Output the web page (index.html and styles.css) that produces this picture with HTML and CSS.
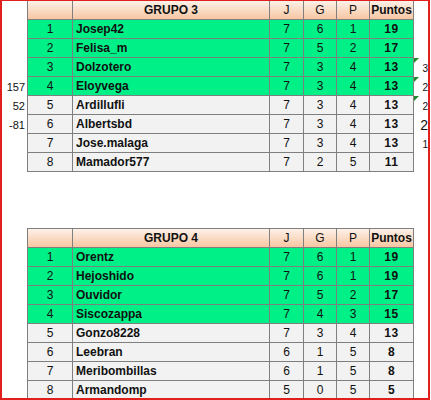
FILE: index.html
```html
<!DOCTYPE html>
<html>
<head>
<meta charset="utf-8">
<link rel="stylesheet" href="styles.css">
</head>
<body>
<div class="frame">
  <div class="table t1">
    <div class="row hdr"><span class="lbl"></span><span class="c first"></span><span class="c name center">GRUPO 3</span><span class="c">J</span><span class="c">G</span><span class="c">P</span><span class="c">Puntos</span><span class="ext"></span></div>
    <div class="row green"><span class="lbl"></span><span class="c first">1</span><span class="c name">Josep42</span><span class="c">7</span><span class="c">6</span><span class="c">1</span><span class="c pts">19</span><span class="ext"></span></div>
    <div class="row green"><span class="lbl"></span><span class="c first">2</span><span class="c name">Felisa_m</span><span class="c">7</span><span class="c">5</span><span class="c">2</span><span class="c pts">17</span><span class="ext"></span></div>
    <div class="row green"><span class="lbl"></span><span class="c first">3</span><span class="c name">Dolzotero</span><span class="c">7</span><span class="c">3</span><span class="c">4</span><span class="c pts">13</span><span class="ext warn">3</span></div>
    <div class="row green"><span class="lbl">157</span><span class="c first">4</span><span class="c name">Eloyvega</span><span class="c">7</span><span class="c">3</span><span class="c">4</span><span class="c pts">13</span><span class="ext warn">2</span></div>
    <div class="row grey"><span class="lbl">52</span><span class="c first">5</span><span class="c name">Ardillufli</span><span class="c">7</span><span class="c">3</span><span class="c">4</span><span class="c pts">13</span><span class="ext warn">2</span></div>
    <div class="row grey"><span class="lbl">-81</span><span class="c first">6</span><span class="c name">Albertsbd</span><span class="c">7</span><span class="c">3</span><span class="c">4</span><span class="c pts">13</span><span class="ext big">2</span></div>
    <div class="row grey"><span class="lbl"></span><span class="c first">7</span><span class="c name">Jose.malaga</span><span class="c">7</span><span class="c">3</span><span class="c">4</span><span class="c pts">13</span><span class="ext">1</span></div>
    <div class="row grey"><span class="lbl"></span><span class="c first">8</span><span class="c name">Mamador577</span><span class="c">7</span><span class="c">2</span><span class="c">5</span><span class="c pts">11</span><span class="ext"></span></div>
  </div>
  <div class="table t2">
    <div class="row hdr"><span class="lbl"></span><span class="c first"></span><span class="c name center">GRUPO 4</span><span class="c">J</span><span class="c">G</span><span class="c">P</span><span class="c">Puntos</span><span class="ext"></span></div>
    <div class="row green"><span class="lbl"></span><span class="c first">1</span><span class="c name">Orentz</span><span class="c">7</span><span class="c">6</span><span class="c">1</span><span class="c pts">19</span><span class="ext"></span></div>
    <div class="row green"><span class="lbl"></span><span class="c first">2</span><span class="c name">Hejoshido</span><span class="c">7</span><span class="c">6</span><span class="c">1</span><span class="c pts">19</span><span class="ext"></span></div>
    <div class="row green"><span class="lbl"></span><span class="c first">3</span><span class="c name">Ouvidor</span><span class="c">7</span><span class="c">5</span><span class="c">2</span><span class="c pts">17</span><span class="ext"></span></div>
    <div class="row green"><span class="lbl"></span><span class="c first">4</span><span class="c name">Siscozappa</span><span class="c">7</span><span class="c">4</span><span class="c">3</span><span class="c pts">15</span><span class="ext"></span></div>
    <div class="row grey"><span class="lbl"></span><span class="c first">5</span><span class="c name">Gonzo8228</span><span class="c">7</span><span class="c">3</span><span class="c">4</span><span class="c pts">13</span><span class="ext"></span></div>
    <div class="row grey"><span class="lbl"></span><span class="c first">6</span><span class="c name">Leebran</span><span class="c">6</span><span class="c">1</span><span class="c">5</span><span class="c pts">8</span><span class="ext"></span></div>
    <div class="row grey"><span class="lbl"></span><span class="c first">7</span><span class="c name">Meribombillas</span><span class="c">6</span><span class="c">1</span><span class="c">5</span><span class="c pts">8</span><span class="ext"></span></div>
    <div class="row grey"><span class="lbl"></span><span class="c first">8</span><span class="c name">Armandomp</span><span class="c">5</span><span class="c">0</span><span class="c">5</span><span class="c pts">5</span><span class="ext"></span></div>
  </div>
</div>
</body>
</html>
```
FILE: styles.css
```css
html, body {
  margin: 0;
  padding: 0;
  background: #ffffff;
}
body {
  font-family: "Liberation Sans", Arial, sans-serif;
  font-size: 12px;
  color: #111;
}
.frame {
  box-sizing: border-box;
  width: 430px;
  height: 400px;
  border-top: 1px solid #e0201c;
  border-left: 2px solid #e0201c;
  border-right: 2px solid #e0201c;
  border-bottom: 2px solid #e0201c;
  overflow: hidden;
}
.row {
  display: grid;
  grid-template-columns: 25px 46px 197px 34px 33px 33px 44px 14px;
  height: 19px;
}
.row > span {
  box-sizing: border-box;
  display: flex;
  align-items: center;
  justify-content: center;
  white-space: nowrap;
}
.c {
  border-right: 1px solid #7f7f7f;
  border-bottom: 1px solid #7f7f7f;
}
.c.first {
  border-left: 1px solid #7f7f7f;
}
.c.name {
  justify-content: flex-start;
  padding-left: 3px;
  font-weight: bold;
}
.c.name.center {
  justify-content: center;
  padding-left: 0;
}
.pts {
  font-weight: bold;
  letter-spacing: 0.5px;
}
.hdr .c {
  background: linear-gradient(#fdf1e8, #f7c6a2);
  font-weight: bold;
}
.hdr .c:nth-child(n+4):nth-child(-n+6) {
  font-weight: normal;
}
.green .c {
  background: #00f088;
}
.grey .c {
  background: #f2f2f2;
}
.lbl {
  justify-content: flex-end !important;
  padding-right: 2px;
  font-size: 11px;
}
.ext {
  position: relative;
  justify-content: flex-end !important;
  align-items: flex-end !important;
  padding-bottom: 3px;
  font-size: 10px;
  line-height: 10px;
}
.ext.big {
  font-size: 14px;
  line-height: 14px;
  padding-bottom: 2px;
}
.ext.warn::before {
  content: "";
  position: absolute;
  left: 0;
  top: 0;
  width: 0;
  height: 0;
  border-top: 5px solid #1f8a2a;
  border-right: 5px solid transparent;
}
.t2 {
  margin-top: 56px;
}
.t2 .hdr {
  height: 20px;
}
.t2 .hdr .c {
  border-top: 1px solid #7f7f7f;
}
```
